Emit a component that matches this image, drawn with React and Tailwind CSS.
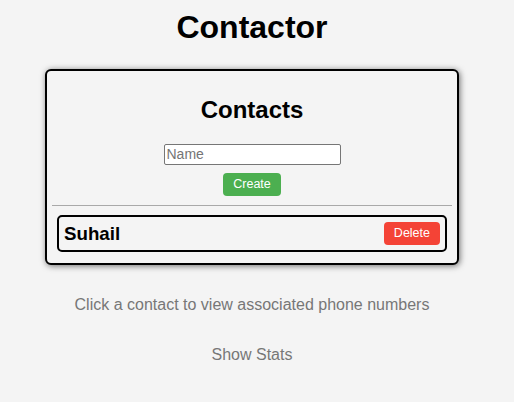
const contacts = [{ id: 1, name: "Suhail" }];

const ContactRow = ({ contact }) => (
  <div className="mx-[5px] mt-[9px] flex items-center justify-between rounded-[5px] border-2 border-black p-[5px]">
    <h3 className="m-0 text-[18.72px] font-bold leading-[23px] text-black">{contact.name}</h3>
    <button className="h-[23px] rounded-[4px] bg-[#f44336] px-[10px] text-[12.5px] leading-[23px] text-white">
      Delete
    </button>
  </div>
);

export default function App() {
  return (
    <div className="min-h-screen w-full bg-[#f4f4f4] font-['Liberation_Sans',Arial,sans-serif]">
      <div className="flex w-[504px] flex-col items-center">
        <h1 className="mt-[9px] text-[32px] font-bold leading-[37px] text-black">Contactor</h1>

        <div className="mt-[23px] w-[414px] rounded-[6px] border-2 border-black bg-[#f4f4f4] px-[5px] pb-[11px] pt-[25px] shadow-[1px_1px_6px_rgba(0,0,0,0.55)]">
          <h2 className="text-center text-[24px] font-bold leading-[28px] text-black">Contacts</h2>

          <div className="mt-[20px] flex flex-col items-center">
            <input
              type="text"
              placeholder="Name"
              className="h-[21px] w-[177px] rounded-[2px] border border-[#767676] bg-white px-[2px] text-[14px] text-black placeholder:text-[#757575] outline-none"
            />
            <button className="mt-[8px] h-[23px] rounded-[4px] bg-[#4caf50] px-[10px] text-[12.5px] leading-[23px] text-white">
              Create
            </button>
          </div>

          <div className="mt-[9px] h-px w-full bg-[#a9a9a9]" />

          {contacts.map((c) => (
            <ContactRow key={c.id} contact={c} />
          ))}
        </div>

        <p className="mt-[31px] text-[16px] leading-[18px] text-[#777]">
          Click a contact to view associated phone numbers
        </p>
        <p className="mt-[32px] text-[16px] leading-[18px] text-[#777]">Show Stats</p>
      </div>
    </div>
  );
}
